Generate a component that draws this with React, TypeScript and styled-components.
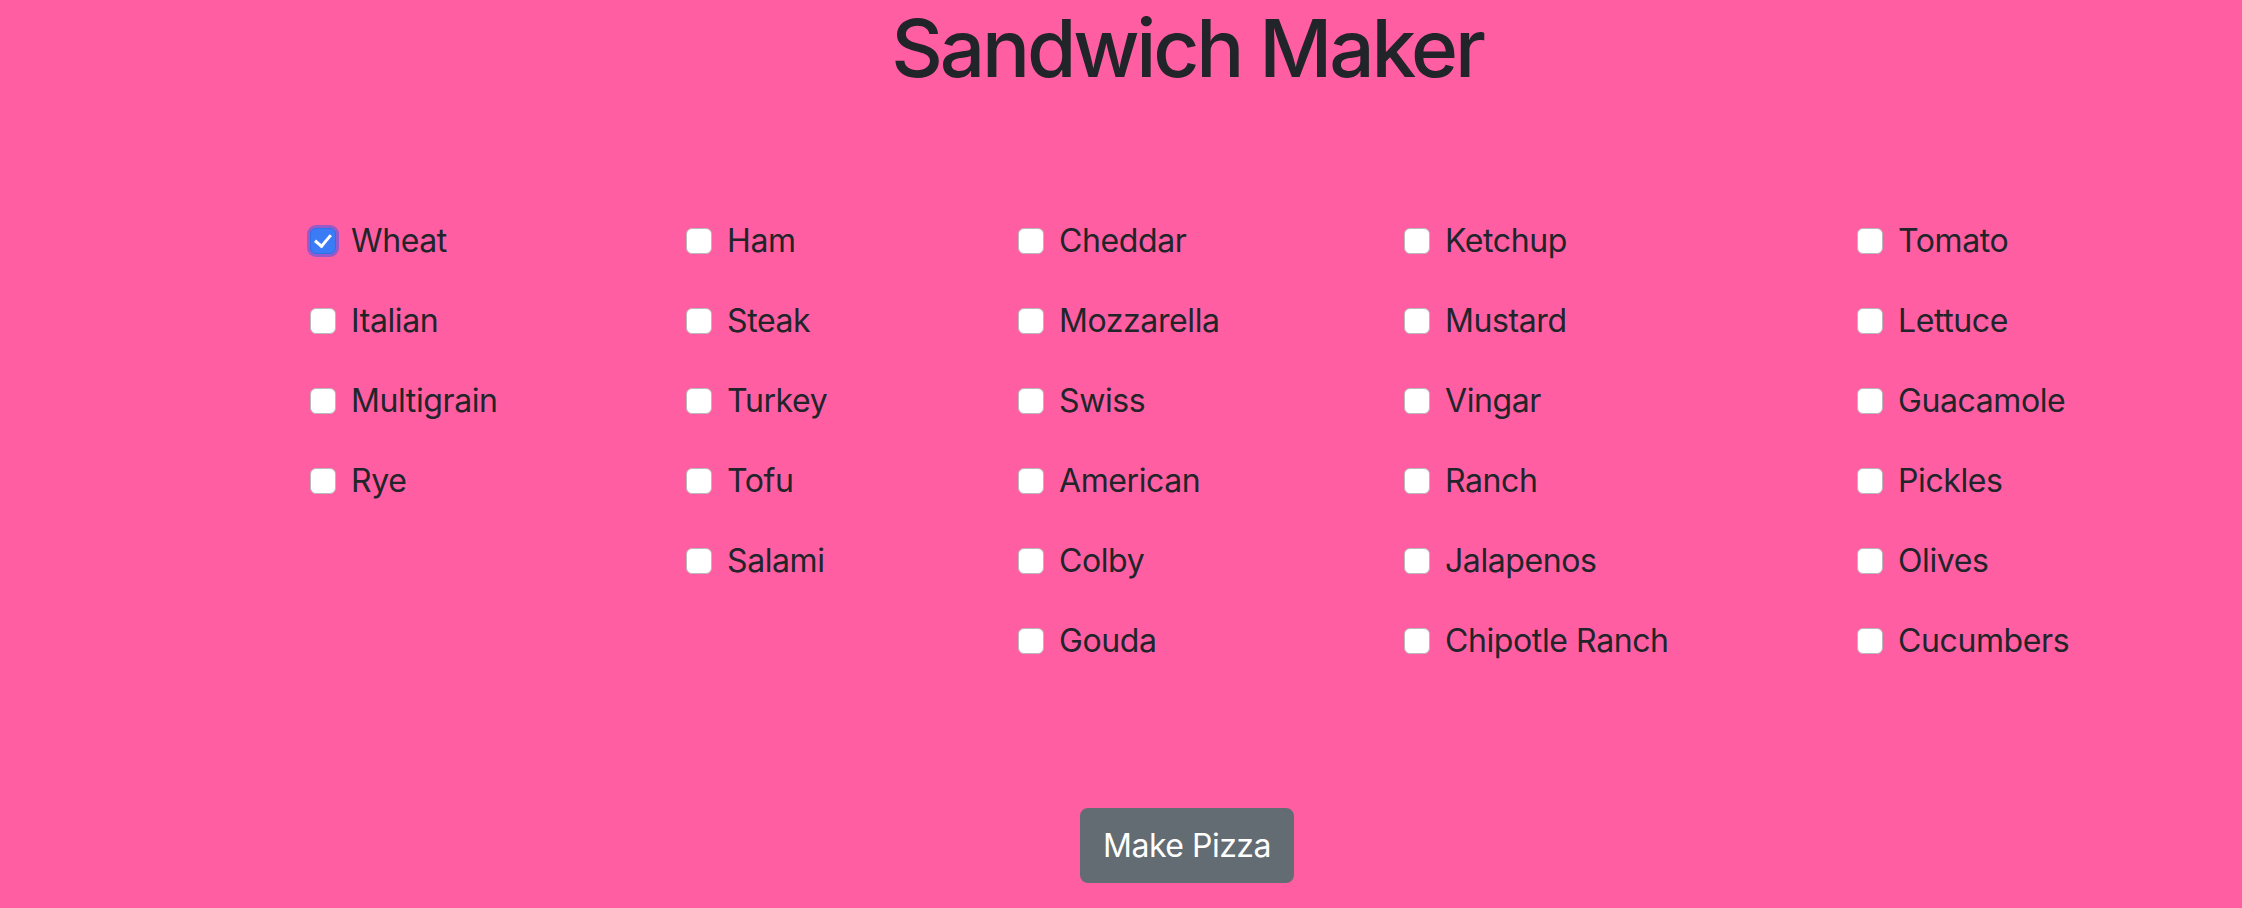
import * as React from "react";
import styled, { createGlobalStyle } from "styled-components";

const GlobalStyle = createGlobalStyle`
  html, body {
    margin: 0;
    padding: 0;
    background-color: #ff5ea3;
  }
  body {
    font-family: Inter, "Noto Sans", "Liberation Sans", sans-serif;
    color: #212529;
  }
`;

const Page = styled.div`
  min-height: 908px;
  padding-left: 132px;
  display: flex;
  flex-direction: column;
  align-items: stretch;
`;

const Title = styled.h1`
  margin: 0;
  font-size: 80px;
  font-weight: 500;
  line-height: 96px;
  text-align: center;
  letter-spacing: -3.2px;
`;

const Columns = styled.div`
  margin-top: 105px;
  display: grid;
  grid-template-columns: 376px 332px 386px 453px 207px;
  justify-content: center;
`;

const Column = styled.div`
  display: flex;
  flex-direction: column;
`;

const Option = styled.label`
  display: flex;
  align-items: center;
  height: 80px;
  font-size: 32px;
  line-height: 1.5;
  letter-spacing: -0.4px;
  white-space: nowrap;
  cursor: pointer;
`;

const Box = styled.input.attrs({ type: "checkbox" })`
  appearance: none;
  -webkit-appearance: none;
  flex: 0 0 auto;
  width: 26px;
  height: 26px;
  margin: 0 15px 0 0;
  border-radius: 6px;
  border: 1px solid #b9b9b9;
  background-color: #ffffff;
  display: grid;
  place-items: center;

  &:checked {
    border-color: #2f6fe8;
    background-color: #3b7cf6;
    box-shadow: 0 0 0 3px rgba(60, 90, 235, 0.55);
  }

  &:checked::after {
    content: "";
    width: 7px;
    height: 13px;
    border: solid #ffffff;
    border-width: 0 3px 3px 0;
    transform: translateY(-2px) rotate(40deg);
  }
`;

const Footer = styled.div`
  margin-top: 127px;
  display: flex;
  justify-content: center;
`;

const Button = styled.button`
  font-family: Inter, "Noto Sans", "Liberation Sans", sans-serif;
  font-size: 32px;
  line-height: 48px;
  letter-spacing: -0.5px;
  width: 214px;
  height: 75px;
  padding: 12px 0;
  color: #ffffff;
  background-color: #636c72;
  border: 2px solid #636c72;
  border-radius: 8px;
  cursor: pointer;
`;

const groups: string[][] = [
  ["Wheat", "Italian", "Multigrain", "Rye"],
  ["Ham", "Steak", "Turkey", "Tofu", "Salami"],
  ["Cheddar", "Mozzarella", "Swiss", "American", "Colby", "Gouda"],
  ["Ketchup", "Mustard", "Vingar", "Ranch", "Jalapenos", "Chipotle Ranch"],
  ["Tomato", "Lettuce", "Guacamole", "Pickles", "Olives", "Cucumbers"],
];

function App() {
  const [picked, setPicked] = React.useState<Record<string, boolean>>({ Wheat: true });

  const toggle = (name: string) => setPicked((p) => ({ ...p, [name]: !p[name] }));

  return (
    <>
      <GlobalStyle />
      <Page>
        <Title>Sandwich Maker</Title>
        <Columns>
          {groups.map((items, i) => (
            <Column key={i}>
              {items.map((name) => (
                <Option key={name}>
                  <Box checked={!!picked[name]} onChange={() => toggle(name)} />
                  {name}
                </Option>
              ))}
            </Column>
          ))}
        </Columns>
        <Footer>
          <Button>Make Pizza</Button>
        </Footer>
      </Page>
    </>
  );
}

export default App;
